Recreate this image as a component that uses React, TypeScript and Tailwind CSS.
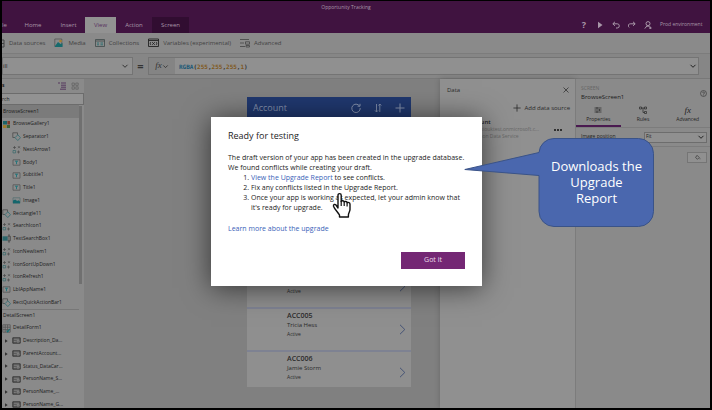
import type { ReactNode } from 'react';

type IconProps = { className?: string };

const Chevron = ({ className = '' }: IconProps) => (
  <svg viewBox="0 0 8 8" className={className} fill="none" stroke="currentColor" strokeWidth="1">
    <path d="M1.5 2.8 4 5.3 6.5 2.8" />
  </svg>
);

const PlusIcon = ({ className = '' }: IconProps) => (
  <svg viewBox="0 0 10 10" className={className} fill="none" stroke="currentColor" strokeWidth="1">
    <path d="M5 .5v9M.5 5h9" />
  </svg>
);

const ShapeIcon = () => (
  <svg viewBox="0 0 9 9" className="size-[9px] shrink-0" fill="none" strokeWidth=".8">
    <path d="M3 5.5H.8V.8h4.7V3" stroke="#4c4c4c" />
    <path d="m5.800 2.800 2.700 2.900-2.700 2.800L3 5.700z" stroke="#2f6d72" />
  </svg>
);

const GlyphIcon = () => (
  <svg viewBox="0 0 9 9" className="size-[9px] shrink-0" fill="none" strokeWidth=".7">
    <path d="M2.5 1v3M1 2.5h3M6 1.2l2 2M8 1.2l-2 2M5 7h3M6.5 5.5v3" stroke="#4a4a4a" />
    <path d="M1 5.5h2.6v2.4H1z" stroke="#37686b" />
  </svg>
);

const TextIcon = () => (
  <svg viewBox="0 0 9 9" className="size-[9px] shrink-0" fill="none" strokeWidth=".8">
    <path d="M1 1.8h7v5.4H1z" stroke="#555" />
    <path d="M3 3.2h3M4.5 3.2v3" stroke="#26757a" strokeWidth="1" />
  </svg>
);

const ImageIcon = () => (
  <svg viewBox="0 0 9 9" className="size-[9px] shrink-0">
    <path d="M1 1.8h7v5.4H1z" fill="none" stroke="#557072" strokeWidth=".8" />
    <path d="M1 4.5 3.2 3.4l2 1.6 1.2-.7L8 5.6v1.6H1z" fill="#15666c" />
  </svg>
);

const GalleryIcon = () => (
  <svg viewBox="0 0 9 9" className="size-[9px] shrink-0">
    <path d="M1 1h4v3.5H1z" fill="#1c6468" />
    <path d="M5.4 1H8v3.5H5.4z" fill="#7c3c2c" />
    <path d="M1 5h3.4v3H1z" fill="#a07a2a" />
    <path d="M4.8 5H8v3H4.8z" fill="#3b6238" />
  </svg>
);

const InputIcon = () => (
  <svg viewBox="0 0 9 9" className="size-[9px] shrink-0">
    <path d="M.5 2.3h5.2v4.4H.5z" fill="#2c666b" />
    <path d="M5.7 2.3h2.8v4.4H5.7M6 1h2M7 1v7M6 8h2" fill="none" stroke="#4c4c4c" strokeWidth=".8" />
  </svg>
);

const FormIcon = () => (
  <svg viewBox="0 0 9 9" className="size-[9px] shrink-0" fill="none" strokeWidth=".7">
    <path d="M.8.8h7.4v7.4H.8zM.8 3.2h7.4M.8 5.6h7.4M3.2.8v7.4M5.6.8v7.4" stroke="#505050" />
    <path d="m4.5 6.5 1.2 1.3 2-2.6" stroke="#147277" strokeWidth="1.1" />
  </svg>
);

const CardIcon = () => (
  <svg viewBox="0 0 9 9" className="size-[9px] shrink-0">
    <path d="M.8 1.8h7.4v5.4H.8z" fill="#5c5c5c" stroke="#333" strokeWidth=".9" />
    <path d="M1.8 3.2h5.4M1.8 5.6h2M5 4.6h2.2v1.5H5z" stroke="#999" strokeWidth=".6" fill="none" />
  </svg>
);

type TreeRow = { label: string; icon?: ReactNode; level: 'screen' | 'top' | 'child' | 'card' };

const tree: TreeRow[] = [
  { label: 'BrowseScreen1', level: 'screen' },
  { label: 'BrowseGallery1', level: 'top', icon: <GalleryIcon /> },
  { label: 'Separator1', level: 'child', icon: <ShapeIcon /> },
  { label: 'NextArrow1', level: 'child', icon: <GlyphIcon /> },
  { label: 'Body1', level: 'child', icon: <TextIcon /> },
  { label: 'Subtitle1', level: 'child', icon: <TextIcon /> },
  { label: 'Title1', level: 'child', icon: <TextIcon /> },
  { label: 'Image1', level: 'child', icon: <ImageIcon /> },
  { label: 'Rectangle11', level: 'top', icon: <ShapeIcon /> },
  { label: 'SearchIcon1', level: 'top', icon: <GlyphIcon /> },
  { label: 'TextSearchBox1', level: 'top', icon: <InputIcon /> },
  { label: 'IconNewItem1', level: 'top', icon: <GlyphIcon /> },
  { label: 'IconSortUpDown1', level: 'top', icon: <GlyphIcon /> },
  { label: 'IconRefresh1', level: 'top', icon: <GlyphIcon /> },
  { label: 'LblAppName1', level: 'top', icon: <TextIcon /> },
  { label: 'RectQuickActionBar1', level: 'top', icon: <ShapeIcon /> },
  { label: 'DetailScreen1', level: 'screen' },
  { label: 'DetailForm1', level: 'top', icon: <FormIcon /> },
  { label: 'Description_Da...', level: 'card', icon: <CardIcon /> },
  { label: 'ParentAccount...', level: 'card', icon: <CardIcon /> },
  { label: 'Status_DataCar...', level: 'card', icon: <CardIcon /> },
  { label: 'PersonName_S...', level: 'card', icon: <CardIcon /> },
  { label: 'PersonName_...', level: 'card', icon: <CardIcon /> },
  { label: 'PersonName_G...', level: 'card', icon: <CardIcon /> },
];

const accounts = [
  { id: 'ACC004', name: 'Cathy Murray' },
  { id: 'ACC005', name: 'Tricia Hess' },
  { id: 'ACC006', name: 'Jamie Storm' },
];

function TopBar() {
  return (
    <header className="flex h-8 shrink-0 flex-col justify-between bg-[#401340] text-[#a897a8]">
      <h1 className="pt-0.5 pr-5 text-center text-[5px] leading-2">Opportunity Tracking</h1>
      <div className="flex items-end">
        <nav className="flex h-4 text-[6px]">
          <button className="w-4 text-left">le</button>
          <button className="w-[30px]">Home</button>
          <button className="ml-1 w-[33px]">Insert</button>
          <button className="w-[31px] bg-[#929292] text-[#57305e]">View</button>
          <button className="w-9">Action</button>
          <button className="w-[37px] bg-[#310d31]">Screen</button>
        </nav>
        <div className="ml-auto flex h-4 items-center gap-2 pr-1">
          <button className="w-2 text-[9px] font-bold" aria-label="Help">?</button>
          <button aria-label="Preview">
            <svg viewBox="0 0 8 8" className="size-2" fill="currentColor"><path d="M2 .8 6.5 4 2 7.2z" /></svg>
          </button>
          <button aria-label="Undo">
            <svg viewBox="0 0 8 8" className="size-2" fill="none" stroke="currentColor"><path d="M3 .8.8 2.8 3 4.8M1 2.8h4.2a2 2 0 0 1 0 4.2H4" /></svg>
          </button>
          <button aria-label="Redo">
            <svg viewBox="0 0 8 8" className="size-2" fill="none" stroke="currentColor"><path d="m5 .8 2.2 2L5 4.8M7 2.8H2.8a2 2 0 0 0-1.6 3.6" /></svg>
          </button>
          <button aria-label="Account">
            <svg viewBox="0 0 8 8" className="size-2" fill="none" stroke="currentColor"><circle cx="4" cy="2.6" r="2" /><path d="M.8 7.6 3 4.8l1 1 1-1 1 1M5 7h2.6M6.3 5.8v2.2" /></svg>
          </button>
          <span className="w-[46px] text-[5px] whitespace-nowrap">Prod environment</span>
        </div>
      </div>
    </header>
  );
}

function Ribbon() {
  const item = 'flex items-center gap-1';
  return (
    <div className="flex h-[21px] shrink-0 items-center gap-[9px] border-b border-[#7c7c7c] bg-[#8a8a8a] text-[6px] text-[#424242]">
      <button className={item}>
        <svg viewBox="0 0 3 9" className="h-[9px] w-[3px]" fill="none" stroke="#444"><path d="M0 1h2v7H0M0 4.5h2" /></svg>
        Data sources
      </button>
      <button className={item}>
        <svg viewBox="0 0 10 10" className="size-[10px]"><path d="M.8 1h7v7.5h-7z" fill="none" stroke="#555" strokeWidth=".8" /><path d="m1 8 3-4 2.5 2L8.5 5v4H1z" fill="#176b6d" /><circle cx="6.5" cy="3" r="1.3" fill="#a78030" /></svg>
        Media
      </button>
      <button className={item}>
        <svg viewBox="0 0 10 10" className="size-[10px]" fill="none" stroke="#3f4a4a" strokeWidth=".8"><path d="M.5 1.5h9v7h-9zM.5 3h9" /><path d="M2 5h2M2 6.8h2M5.5 5h2.5M5.5 6.8h2.5" stroke="#1d6b6d" /></svg>
        Collections
      </button>
      <button className={item}>
        <svg viewBox="0 0 11 10" className="h-[10px] w-[11px]" fill="none" stroke="#222" strokeWidth=".9"><path d="M.5 1h10v7.5H.5zM.5 2.5h10M3 4c-1 .5-1 2.5 0 3M8 4c1 .5 1 2.5 0 3M4.2 4.2l2.6 2.6M6.8 4.2 4.2 6.8" /></svg>
        Variables (experimental)
      </button>
      <button className={item}>
        <svg viewBox="0 0 10 10" className="size-[10px]" fill="none" stroke="#444"><path d="M0 1.5h9M0 5h4M5.5 3.8h4v2.4h-4zM0 8.5h5M6 7.5h3.5v1.5H6z" strokeWidth=".8" /></svg>
        Advanced
      </button>
    </div>
  );
}

function FormulaBar() {
  return (
    <div className="flex h-[25px] shrink-0 items-center border-b border-[#787878] bg-[#868686] pr-[11px]">
      <div className="grid h-[18px] w-[131px] grid-cols-[1fr_10px] items-center border border-[#747474] bg-[#909090] pr-px text-[6px] text-[#222]">
        <select aria-label="Property" className="col-span-2 col-start-1 row-start-1 appearance-none bg-transparent outline-none">
          <option>ill</option>
        </select>
        <Chevron className="pointer-events-none col-start-2 row-start-1 size-2 text-[#333]" />
      </div>
      <span className="w-[15px] text-center text-[11px] leading-3 font-bold text-[#333]">=</span>
      <div className="flex h-[18px] min-w-0 flex-1 items-center border border-[#747474] bg-[#909090]">
        <button className="flex h-full w-[26px] items-center justify-center bg-[#848484] text-[#333]">
          <i className="font-['Liberation_Serif',serif] text-[9px]">fx</i>
          <Chevron className="size-[7px]" />
        </button>
        <code className="flex-1 pl-1 font-['DejaVu_Sans_Mono',monospace] text-[6px] font-bold text-[#333]">
          <span className="text-[#1c5876]">RGBA</span>(<span className="text-[#80581c]">255</span>,<span className="text-[#80581c]">255</span>,<span className="text-[#80581c]">255</span>,<span className="text-[#80581c]">1</span>)
        </code>
        <Chevron className="mr-px size-2 text-[#222]" />
      </div>
    </div>
  );
}

const rowIndent = { screen: 'pl-px', top: '', child: 'pl-[10px]', card: 'pl-[3px]' };

function TreePanel() {
  return (
    <aside className="flex w-[82px] shrink-0 flex-col overflow-hidden bg-[#8a8a8a] text-[5px] text-[#1c1c1c]">
      <div className="flex h-[14px] shrink-0 items-center">
        <span className="font-bold">s</span>
        <svg viewBox="0 0 8 8" className="ml-auto size-2" fill="none" stroke="#51305a" strokeWidth=".9"><path d="M0 1h2M3 1h5M3 3.2h5M3 5.2h5M2 7.2h6" /></svg>
        <svg viewBox="0 0 8 8" className="mx-[5px] size-2" fill="none" stroke="#606060" strokeWidth=".7"><path d="M1 1h2.4v2.4H1zM4.8 1h2.4v2.4H4.8zM1 4.8h2.4v2.4H1zM4.8 4.8h2.4v2.4H4.8z" /></svg>
      </div>
      <input aria-label="Search" defaultValue="rch" className="h-[12px] w-full shrink-0 border border-l-0 border-[#6c6c6c] bg-[#929292] text-[5px] outline-none" />
      <div className="flex min-h-0 flex-1">
        <ul className="grid h-[306px] min-w-0 flex-1 auto-rows-fr">
          {tree.map((row, i) => (
            <li
              key={row.label}
              className={`flex items-center gap-[2px] whitespace-nowrap ${rowIndent[row.level]} ${i === 0 ? 'bg-[#7b7b7b]' : ''} ${i === 16 ? 'border-t border-[#777]' : ''}`}
            >
              {row.level === 'card' && (
                <svg viewBox="0 0 5 6" className="mr-px h-[6px] w-[4px]"><path d="M0 .8 3.4 3 0 5.2z" fill="#333" /></svg>
              )}
              {row.icon}
              {row.label}
            </li>
          ))}
        </ul>
        <div className="w-[5px] shrink-0 pt-px">
          <div className="h-[178px] w-[3px] bg-[#707070]" />
        </div>
      </div>
    </aside>
  );
}

function PhonePreview() {
  return (
    <main className="flex min-w-0 flex-1 justify-end bg-[#808080] pt-[18px] pr-[29px] pb-[21px]">
      <section className="flex w-[164px] flex-col bg-[#8f8f8f] text-[#2a2a2a]">
        <div className="flex h-[22px] shrink-0 items-center gap-[13px] bg-[#20386f] px-[6px] text-[#8592ae]">
          <h2 className="flex-1 text-[9px]">Account</h2>
          <svg viewBox="0 0 10 10" className="size-[10px]" fill="none" stroke="currentColor"><path d="M8.5 3A4.2 4.2 0 1 0 9.2 5M9 .8V3.2H6.6" /></svg>
          <svg viewBox="0 0 8 10" className="h-[10px] w-2" fill="none" stroke="currentColor" strokeWidth=".9"><path d="M2.5 1v8M1 7.4 2.5 9 4 7.4M5.8 9V1M4.5 2.5 5.8 1l1.5 1.5" /></svg>
          <PlusIcon className="size-[10px]" />
        </div>
        <div className="mt-auto">
          {accounts.map((a, i) => (
            <article key={a.id} className={`flex items-start border-t-2 border-[#7e8292] pt-[2px] pr-[5px] pl-10 ${i === accounts.length - 1 ? 'h-[37px]' : 'h-[43px]'}`}>
              <div className="flex-1">
                <h3 className="text-[7px] leading-[10px] font-semibold">{a.id}</h3>
                <p className="text-[6px] leading-[9px]">{a.name}</p>
                <p className="text-[5px] leading-[9px]">Active</p>
              </div>
              <svg viewBox="0 0 7 11" className="mt-[13px] h-[11px] w-[7px]" fill="none" stroke="#3d4d73" strokeWidth=".9"><path d="m1 .8 4.8 4.7L1 10.2" /></svg>
            </article>
          ))}
        </div>
      </section>
    </main>
  );
}

function DataPanel() {
  return (
    <section className="w-[135px] shrink-0 bg-[#909090] px-[5px] pt-[5px] text-[#2a2a2a] shadow-[0_0_6px_rgba(0,0,0,0.2)]">
      <div className="flex h-3 items-center justify-between pl-[2px]">
        <h2 className="text-[6px] font-medium">Data</h2>
        <button aria-label="Close">
          <svg viewBox="0 0 8 8" className="size-2" fill="none" stroke="#333" strokeWidth=".8"><path d="m1.5 1.5 5 5M6.5 1.5l-5 5" /></svg>
        </button>
      </div>
      <button className="mt-[6px] ml-auto flex h-3 items-center gap-[3px] text-[6px] whitespace-nowrap">
        <PlusIcon className="size-2" />
        Add data source
      </button>
      <div className="mt-[5px] flex items-center pl-[22px]">
        <div className="text-[5px] leading-[7px] whitespace-nowrap text-[#666]">
          <h3 className="text-[6px] font-semibold text-[#222]">Account</h3>
          <p>n@pakiouktest.onmicrosoft.c...</p>
          <p>Common Data Service</p>
        </div>
        <button aria-label="More" className="ml-auto pr-2">
          <svg viewBox="0 0 8 2" className="h-[2px] w-2" fill="#111"><circle cx="1" cy="1" r="1" /><circle cx="4" cy="1" r="1" /><circle cx="7" cy="1" r="1" /></svg>
        </button>
      </div>
    </section>
  );
}

function PropertiesPanel() {
  const tab = 'flex flex-1 flex-col items-center gap-px border-b-2 pb-[2px]';
  return (
    <aside className="w-[135px] shrink-0 border-l border-[#7c7c7c] bg-[#8a8a8a] text-[5px] text-[#222]">
      <div className="flex items-center justify-between pt-[5px] pr-[3px] pl-[5px]">
        <div>
          <p className="leading-2 text-[#666]">SCREEN</p>
          <h2 className="text-[6px] leading-[10px] text-[#1c1c1c]">BrowseScreen1</h2>
        </div>
        <svg viewBox="0 0 8 8" className="size-[7px]" fill="none" stroke="#3c3c3c" strokeWidth=".8"><circle cx="4" cy="4" r="3.4" /><path d="M2.9 3.2a1.1 1.1 0 1 1 1.1 1.3v.4M4 5.5v.7" /></svg>
      </div>
      <div className="mt-1 flex h-[21px] leading-2">
        <button className={`${tab} border-[#4a1a50]`}>
          <svg viewBox="0 0 8 8" className="size-2" fill="none" stroke="#333" strokeWidth=".8"><path d="M.5 2h7M.5 4h7M.5 6h7M3 1v2M5.5 3v2M3 5v2" /></svg>
          Properties
        </button>
        <button className={`${tab} border-transparent`}>
          <svg viewBox="0 0 8 8" className="size-2" fill="none" stroke="#333" strokeWidth=".8"><path d="M.5 1h2v2h-2zM5.5 1h2v2h-2zM5.5 5.5h2v2h-2zM2.5 2h3M4 2v4.5h1.5" /></svg>
          Rules
        </button>
        <button className={`${tab} border-transparent`}>
          <i className="font-['Liberation_Serif',serif] text-[9px]">fx</i>
          Advanced
        </button>
      </div>
      <div className="flex h-5 items-center justify-between border-y border-[#7c7c7c] pr-[3px] pl-[5px]">
        <label htmlFor="fit">Image position</label>
        <div className="grid h-[11px] w-[63px] grid-cols-[1fr_9px] items-center border border-[#6d6d6d] bg-[#909090]">
          <select id="fit" className="col-span-2 col-start-1 row-start-1 appearance-none bg-transparent pl-px outline-none">
            <option>Fit</option>
          </select>
          <Chevron className="pointer-events-none col-start-2 row-start-1 size-2" />
        </div>
      </div>
      <button aria-label="Fill colour" className="mt-[5px] mr-[3px] ml-auto flex h-[11px] w-5 items-center justify-center border border-[#757575] bg-[#909090]">
        <svg viewBox="0 0 8 8" className="size-[7px]" fill="none" stroke="#333" strokeWidth=".8"><path d="m3.5 1.5 2.5 2.5-2 2L1.8 4zM6.8 5v1" /></svg>
      </button>
    </aside>
  );
}

function ReadyDialog() {
  return (
    <div className="pointer-events-none absolute inset-0 grid place-items-center pr-[19px] pb-[7px]">
      <div role="dialog" aria-label="Ready for testing" className="pointer-events-auto flex h-[169px] w-[271px] flex-col bg-white px-[17px] pt-[12px] pb-[17px] text-[7px] leading-[10px] text-[#1c1c1c] shadow-[0_2px_26px_rgba(0,0,0,0.6)]">
        <h2 className="text-[9px] leading-[14px]">Ready for testing</h2>
        <p className="mt-[10px]">The draft version of your app has been created in the upgrade database.</p>
        <p>We found conflicts while creating your draft.</p>
        <ol className="list-decimal pl-[23px]">
          <li><a href="#report" className="text-[#3a62b8]">View the Upgrade Report</a> to see conflicts.</li>
          <li>Fix any conflicts listed in the Upgrade Report.</li>
          <li>Once your app is working as expected, let your admin know that it's ready for upgrade.</li>
        </ol>
        <a href="#learn" className="mt-[11px] self-start text-[#3a62b8]">Learn more about the upgrade</a>
        <button className="mt-auto h-[17px] w-16 self-end bg-[#742774] text-[#eadcea]">Got it</button>
      </div>
    </div>
  );
}

function Callout() {
  return (
    <div className="absolute top-[137px] left-[462px] h-[89px] w-[190px]">
      <svg viewBox="0 0 190 89" className="absolute inset-0 size-full">
        <path
          d="M90 .5h84.5a15 15 0 0 1 15 15v58a15 15 0 0 1-15 15H90a15 15 0 0 1-15-15v-36L.8 31.5 75 14.500A15 15 0 0 1 90 .5z"
          fill="#4a67ae"
          stroke="#3a5388"
        />
      </svg>
      <p className="relative ml-[75px] px-[10px] pt-5 text-center text-[13px] leading-4 text-white">
        Downloads the Upgrade Report
      </p>
    </div>
  );
}

function HandPointer() {
  return (
    <svg viewBox="0 0 20 26" className="absolute top-[191px] left-[330px] h-[26px] w-5" fill="#fff" stroke="#111" strokeWidth="1.4" strokeLinejoin="round">
      <path d="M6 16V3.2a1.6 1.6 0 0 1 3.2 0v6.300c.6-1 2.6-1 3 .4.8-.8 2.6-.6 2.9.8 1-.6 2.9-.2 2.9 1.5v5.3c0 2-1.6 3.5-1.6 5.5v2H7.500v-2C6 20.500 2.500 17 1.500 14.200c-.4-1.800 1.500-2.300 2.500-1.200z" />
      <path d="M9.2 9v5M12.2 10v4M15.1 11v3.5" fill="none" strokeWidth="1.2" />
    </svg>
  );
}

export default function App() {
  return (
    <div className="relative flex h-screen flex-col overflow-hidden border-2 border-t border-black bg-[#808080] font-['Open_Sans','Noto_Sans',sans-serif]">
      <TopBar />
      <Ribbon />
      <FormulaBar />
      <div className="flex min-h-0 flex-1">
        <TreePanel />
        <PhonePreview />
        <DataPanel />
        <PropertiesPanel />
      </div>
      <ReadyDialog />
      <HandPointer />
      <Callout />
    </div>
  );
}
